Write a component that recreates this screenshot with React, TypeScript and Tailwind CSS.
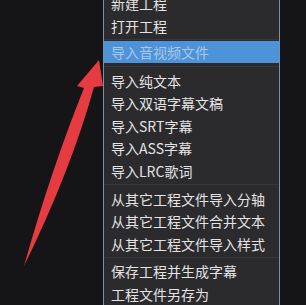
const FONT = '"Noto Sans CJK SC", "Noto Sans", sans-serif'

type Entry = { label: string; active?: boolean } | { sep: string }

const entries: Entry[] = [
  { label: '新建工程' },
  { label: '打开工程' },
  { sep: 'h-[3.75px]' },
  { label: '导入音视频文件', active: true },
  { sep: 'h-[6.25px]' },
  { label: '导入纯文本' },
  { label: '导入双语字幕文稿' },
  { label: '导入SRT字幕' },
  { label: '导入ASS字幕' },
  { label: '导入LRC歌词' },
  { sep: 'h-[5.5px]' },
  { label: '从其它工程文件导入分轴' },
  { label: '从其它工程文件合并文本' },
  { label: '从其它工程文件导入样式' },
  { sep: 'h-[5px]' },
  { label: '保存工程并生成字幕' },
  { label: '工程文件另存为' },
]

function Arrow() {
  return (
    <svg className="absolute left-0 top-0 pointer-events-none" width="306" height="305" viewBox="0 0 306 305">
      <path
        d="M99,60 L103,86 L94,87 Q71,170 24,266 Q51,170 84,88 L77,86 Z"
        fill="#e63b40"
      />
    </svg>
  )
}

export default function App() {
  return (
    <div className="relative w-[306px] h-[305px] overflow-hidden bg-[#151417] flex" style={{ fontFamily: FONT }}>
      <div className="w-[103px] shrink-0" />
      <div className="w-[177px] shrink-0 flex flex-col bg-[#2b2a2d] border-x border-[#7391b4]">
        {entries.map((e, i) => {
          if ('sep' in e) {
            return (
              <div key={i} className={`${e.sep} flex items-center`}>
                <div className="w-full h-px bg-[#38373a]" />
              </div>
            )
          }
          return (
            <div
              key={i}
              className={`${i === 0 ? 'mt-[-9.5px] h-[24.25px]' : 'h-[22.5px]'} shrink-0 flex items-center pl-[7px] text-[14px] leading-none whitespace-nowrap ${
                e.active ? 'bg-[#4e93d9] text-[#a8c8ea]' : 'text-[#e4e4e4]'
              }`}
            >
              {e.label}
            </div>
          )
        })}
      </div>
      <div className="flex-1 bg-[#141318]" />
      <Arrow />
    </div>
  )
}
